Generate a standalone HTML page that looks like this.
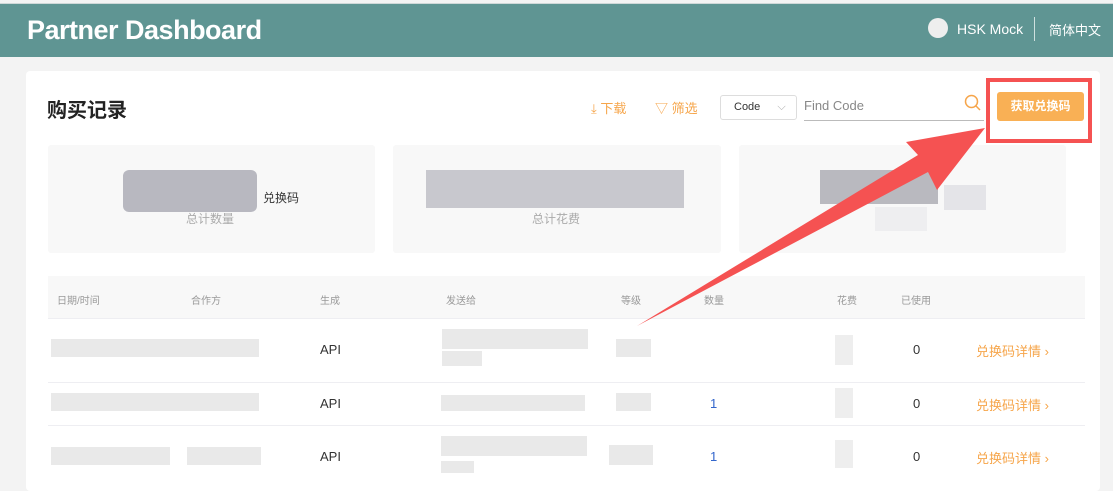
<!DOCTYPE html>
<html><head><meta charset="utf-8"><style>
*{margin:0;padding:0;box-sizing:border-box}
body{width:1113px;height:477px;overflow:hidden;background:#f3f3f3;font-family:"Liberation Sans","Noto Sans CJK SC",sans-serif;position:relative}
.a{position:absolute}
.hdr{left:0;top:3px;width:1113px;height:54px;background:#5f9593;border-top:1px solid #cfd8d8}
.card{left:26px;top:71px;width:1074px;height:420px;background:#fff;border-radius:4px}
.box{background:#f8f8f8;border-radius:3px}
.blk{background:#e9e9e9}
.th{font-size:10px;color:#999;top:292px}
.td{font-size:13px;color:#333}
.lnk{font-size:13px;color:#f6a54a}
.line{height:1px;background:#eeeef2;left:48px;width:1037px}
</style></head><body>
<div class="a hdr"></div>
<div class="a" style="left:27px;top:15px;color:#fff;font-size:27px;font-weight:bold;letter-spacing:-0.5px">Partner Dashboard</div>
<div class="a" style="left:928px;top:18px;width:20px;height:20px;border-radius:50%;background:#eee"></div>
<div class="a" style="left:957px;top:21px;color:#fff;font-size:14px">HSK Mock</div>
<div class="a" style="left:1034px;top:17px;width:1px;height:24px;background:#cfe0df"></div>
<div class="a" style="left:1049px;top:20px;color:#fff;font-size:13px">简体中文</div>
<div class="a card"></div>
<div class="a" style="left:47px;top:94px;font-size:20px;font-weight:bold;color:#222">购买记录</div>
<div class="a" style="left:591px;top:98px;font-size:13px;color:#f6a54a">⤓ 下载</div>
<div class="a" style="left:655px;top:98px;font-size:13px;color:#f6a54a">▽ 筛选</div>
<div class="a" style="left:720px;top:95px;width:77px;height:25px;border:1px solid #ddd;border-radius:3px;font-size:11px;color:#333;padding:5px 0 0 13px">Code <span style="color:#aaa;margin-left:14px">⌵</span></div>
<div class="a" style="left:804px;top:98px;font-size:13px;color:#888">Find Code</div>
<div class="a" style="left:804px;top:120px;width:180px;height:1px;background:#bbb"></div>
<svg class="a" style="left:964px;top:94px" width="18" height="18"><circle cx="7.5" cy="7.5" r="6" fill="none" stroke="#f6a54a" stroke-width="1.5"/><line x1="12" y1="12" x2="16" y2="16" stroke="#f6a54a" stroke-width="1.5"/></svg>
<div class="a" style="left:997px;top:92px;width:87px;height:29px;background:#f9b055;border-radius:3px;color:#fff;font-size:12px;font-weight:bold;text-align:center;line-height:29px">获取兑换码</div>
<div class="a" style="left:986px;top:78px;width:106px;height:65px;border:4px solid #f55252"></div>
<div class="a box" style="left:48px;top:145px;width:327px;height:108px"></div>
<div class="a box" style="left:393px;top:145px;width:328px;height:108px"></div>
<div class="a box" style="left:739px;top:145px;width:327px;height:108px"></div>
<div class="a" style="left:123px;top:170px;width:134px;height:42px;background:#b8b8c0;border-radius:6px"></div>
<div class="a" style="left:263px;top:189px;font-size:12px;color:#333">兑换码</div>
<div class="a" style="left:186px;top:210px;font-size:12px;color:#aaa">总计数量</div>
<div class="a" style="left:426px;top:170px;width:258px;height:38px;background:#c8c8ce"></div>
<div class="a" style="left:532px;top:210px;font-size:12px;color:#aaa">总计花费</div>
<div class="a" style="left:820px;top:170px;width:118px;height:34px;background:#b9b9bf"></div>
<div class="a" style="left:944px;top:185px;width:42px;height:25px;background:#e4e4e8"></div>
<div class="a" style="left:875px;top:207px;width:52px;height:24px;background:#eeeef0"></div>
<div class="a" style="left:48px;top:276px;width:1037px;height:42px;background:#f8f8f8"></div>
<div class="a th" style="left:57px">日期/时间</div><div class="a th" style="left:191px">合作方</div><div class="a th" style="left:320px">生成</div><div class="a th" style="left:446px">发送给</div><div class="a th" style="left:621px">等级</div><div class="a th" style="left:704px">数量</div><div class="a th" style="left:837px">花费</div><div class="a th" style="left:901px">已使用</div>
<div class="a line" style="top:318px"></div><div class="a line" style="top:382px"></div><div class="a line" style="top:425px"></div>
<div class="a blk" style="left:51px;top:339px;width:208px;height:18px"></div>
<div class="a blk" style="left:442px;top:329px;width:146px;height:20px"></div><div class="a blk" style="left:442px;top:351px;width:40px;height:15px"></div>
<div class="a blk" style="left:616px;top:339px;width:35px;height:18px"></div>
<div class="a blk" style="left:51px;top:393px;width:208px;height:18px"></div>
<div class="a blk" style="left:441px;top:395px;width:144px;height:16px"></div>
<div class="a blk" style="left:616px;top:393px;width:35px;height:18px"></div>
<div class="a blk" style="left:51px;top:447px;width:119px;height:18px"></div><div class="a blk" style="left:187px;top:447px;width:74px;height:18px"></div>
<div class="a blk" style="left:441px;top:436px;width:146px;height:20px"></div><div class="a blk" style="left:441px;top:461px;width:33px;height:12px"></div>
<div class="a blk" style="left:609px;top:445px;width:44px;height:20px"></div>
<div class="a blk" style="left:835px;top:335px;width:18px;height:30px;background:#eee"></div>
<div class="a blk" style="left:835px;top:388px;width:18px;height:30px;background:#eee"></div>
<div class="a blk" style="left:835px;top:440px;width:18px;height:28px;background:#eee"></div>
<div class="a td" style="left:320px;top:342px">API</div><div class="a td" style="left:320px;top:396px">API</div><div class="a td" style="left:320px;top:449px">API</div>
<div class="a td" style="left:710px;top:396px;color:#36c">1</div><div class="a td" style="left:710px;top:449px;color:#36c">1</div>
<div class="a td" style="left:913px;top:342px">0</div><div class="a td" style="left:913px;top:396px">0</div><div class="a td" style="left:913px;top:449px">0</div>
<div class="a lnk" style="left:976px;top:341px">兑换码详情 ›</div><div class="a lnk" style="left:976px;top:395px">兑换码详情 ›</div><div class="a lnk" style="left:976px;top:448px">兑换码详情 ›</div>
<svg class="a" style="left:0;top:0" width="1113" height="477"><polygon points="985,128 937,190 928,172 637,326 918,155 906,142" fill="#f55252"/></svg>
</body></html>
